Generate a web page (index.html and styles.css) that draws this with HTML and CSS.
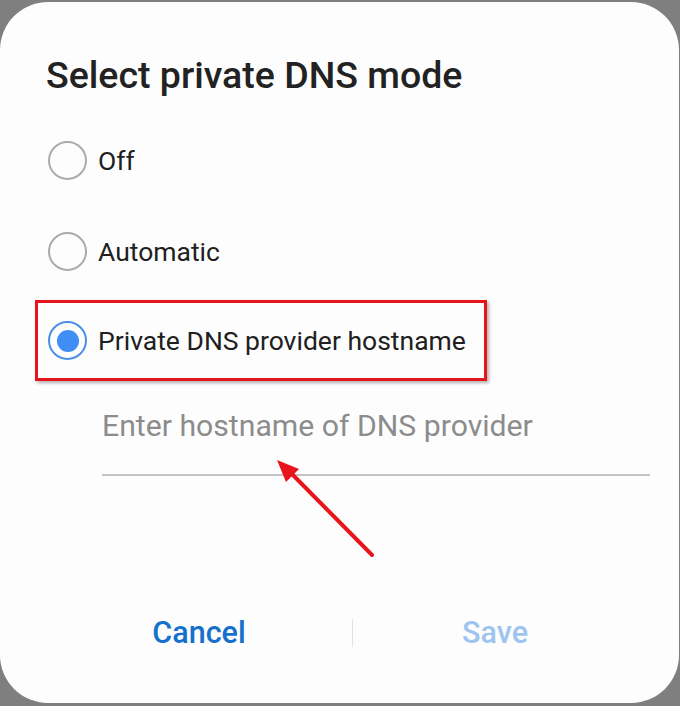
FILE: index.html
```html
<!DOCTYPE html>
<html>
<head>
<meta charset="utf-8">
<link rel="stylesheet" href="styles.css">
</head>
<body>
<div class="dialog">
  <h1 class="title">Select private DNS mode</h1>
  <div class="options">
    <div class="option"><span class="radio"></span><span class="label">Off</span></div>
    <div class="option"><span class="radio"></span><span class="label">Automatic</span></div>
    <div class="option highlight"><span class="radio checked"></span><span class="label">Private DNS provider hostname</span></div>
  </div>
  <div class="field">
    <div class="placeholder">Enter hostname of DNS provider</div>
  </div>
  <div class="buttons">
    <div class="btn cancel">Cancel</div>
    <div class="divider"></div>
    <div class="btn save">Save</div>
  </div>
  <svg class="arrow" width="120" height="120" viewBox="0 0 120 120">
    <line x1="104" y1="104" x2="20" y2="19" stroke="#e8141c" stroke-width="4" stroke-linecap="round"/>
    <polygon points="9,9 31,18 18,31" fill="#e8141c"/>
  </svg>
</div>
</body>
</html>
```
FILE: styles.css
```css
html, body {
  margin: 0;
  padding: 0;
}
body {
  background: #7f7f7f;
  width: 680px;
  height: 706px;
  overflow: hidden;
  font-family: Roboto, "Noto Sans", sans-serif;
}
.dialog {
  position: relative;
  box-sizing: border-box;
  width: 679px;
  height: 701px;
  margin-top: 2px;
  background: #fdfdfd;
  border-radius: 48px;
  padding-top: 51px;
}
.title {
  margin: 0 0 0 46px;
  font-size: 37.5px;
  font-weight: 500;
  color: #222;
  line-height: 44px;
}
.options {
  margin-top: 18px;
  display: flex;
  flex-direction: column;
}
.option {
  display: flex;
  align-items: center;
  height: 91px;
  padding-left: 48px;
  box-sizing: border-box;
}
.label {
  font-size: 26.5px;
  color: #202020;
  margin-left: 11px;
}
.radio {
  box-sizing: border-box;
  width: 39px;
  height: 39px;
  border: 2px solid #ababab;
  border-radius: 50%;
  display: flex;
  align-items: center;
  justify-content: center;
}
.radio.checked {
  border-color: #4a8fe6;
}
.radio.checked::after {
  content: "";
  width: 22px;
  height: 22px;
  border-radius: 50%;
  background: #3e8ef5;
}
.highlight {
  margin: 3px 0 7px 35px;
  width: 452px;
  height: 81px;
  padding-left: 10px;
  border: 3px solid #e8141c;
  box-shadow: 2px 2px 3px rgba(0,0,0,0.3);
}
.field {
  margin: 16px 29px 0 102px;
  border-bottom: 2px solid #c4c4c4;
  height: 70px;
}
.placeholder {
  font-size: 30.2px;
  color: #8c8c8c;
  line-height: 44px;
}
.buttons {
  margin: 139px 0 0 46px;
  display: grid;
  grid-template-columns: 306px 2px 282px;
  align-items: center;
  height: 30px;
}
.btn {
  text-align: center;
  font-size: 30.5px;
  font-weight: 500;
}
.cancel { color: #1570cc; }
.save { color: #9dc5ef; }
.divider {
  width: 1px;
  height: 28px;
  background: #e2e2e2;
}
.arrow {
  position: absolute;
  left: 268px;
  top: 449px;
}
```
